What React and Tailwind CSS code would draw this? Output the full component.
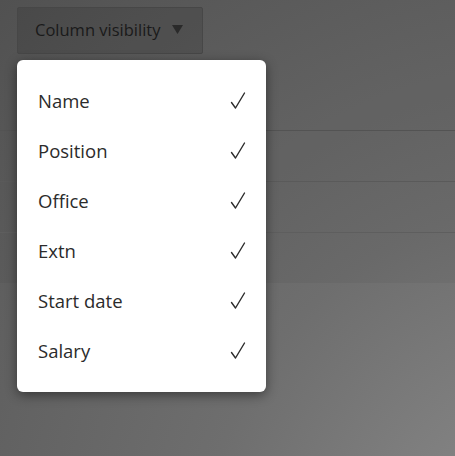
import React from "react";

const columns = ["Name", "Position", "Office", "Extn", "Start date", "Salary"];

const Check = () => (
	<svg width="16" height="18" viewBox="0 0 16 18" fill="none" className="text-[#2b2b2b]">
		<path d="M1.5 10.5 L5.5 16 L14.5 1" stroke="currentColor" strokeWidth="1.4" strokeLinecap="round" strokeLinejoin="round" />
	</svg>
);

const App = () => {
	return (
		<div
			className="relative h-[456px] w-[455px] overflow-hidden bg-[radial-gradient(circle_at_560px_560px,#8e8e8e_0%,#6e6e6e_45%,#555555_100%)]"
			style={{fontFamily: '"Open Sans", "Noto Sans", sans-serif'}}
		>
			<div className="bg-black/[0.04] pt-[7px]">
				<div className="px-[17px]">
					<button className="flex h-[47px] w-[186px] items-center gap-[12px] rounded-[2px] border border-[#474747] bg-black/10 pl-[17px] text-[16.5px] text-[#1a1a1a]">
						<span>Column visibility</span>
						<svg width="11" height="9" viewBox="0 0 11 9" className="mt-[-2px] text-[#2a2a2a]">
							<path d="M0 0 H11 L5.5 9 Z" fill="currentColor" />
						</svg>
					</button>
				</div>

				<div className="mt-[26px]">
					<div className="h-[51px] border-b border-[#535353]" />
					<div className="h-[51px] border-b border-[#5a5a5a]" />
					<div className="h-[51px] border-b border-[#5e5e5e]" />
					<div className="h-[50px]" />
				</div>
			</div>

			<div className="absolute left-[17px] top-[60px] w-[249px] rounded-md bg-white py-[16px] shadow-[0_3px_12px_rgba(0,0,0,0.45)]">
				{columns.map((col) => (
					<div
						key={col}
						className="flex h-[50px] items-center justify-between pl-[21px] pr-[20px] text-[18.5px] text-[#2b2b2b]"
					>
						<span>{col}</span>
						<Check />
					</div>
				))}
			</div>
		</div>
	);
};

export default App;
